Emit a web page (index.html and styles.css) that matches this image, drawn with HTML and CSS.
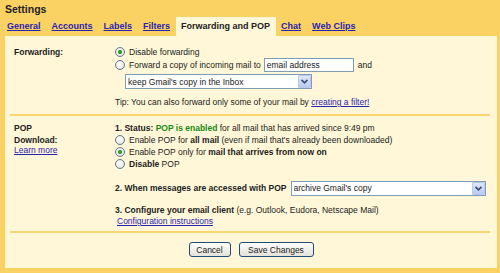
FILE: index.html
```html
<!DOCTYPE html>
<html lang="en">
<head>
<meta charset="utf-8">
<title>Settings</title>
<link rel="stylesheet" href="styles.css">
</head>
<body>
<header class="header">
  <h1 class="title">Settings</h1>
  <nav class="tabs">
    <a class="tab" href="#">General</a>
    <a class="tab" href="#">Accounts</a>
    <a class="tab" href="#">Labels</a>
    <a class="tab" href="#">Filters</a>
    <span class="tab active">Forwarding and POP</span>
    <a class="tab" href="#">Chat</a>
    <a class="tab" href="#">Web Clips</a>
  </nav>
</header>
<main class="panel">
  <section class="section fwd">
    <div class="label">Forwarding:</div>
    <div class="body">
      <label class="opt"><input class="radio" type="radio" name="fwd" checked>Disable forwarding</label>
      <label class="opt opt-input"><input class="radio" type="radio" name="fwd">Forward a copy of incoming mail to <input class="text-input" type="text" value="email address"> and</label>
      <div class="select select-keep">
        <select><option>keep Gmail's copy in the Inbox</option></select>
        <span class="select-arrow"><svg width="9" height="7" viewBox="0 0 9 7"><path d="M1.5 1.8 L4.5 4.8 L7.5 1.8" fill="none" stroke="#3d4f78" stroke-width="1.7"/></svg></span>
      </div>
      <p class="tip">Tip: You can also forward only some of your mail by <a class="link" href="#">creating a filter!</a></p>
    </div>
  </section>
  <hr class="sep">
  <section class="section pop">
    <div class="label">
      <div>POP<br>Download:</div>
      <a class="link learn" href="#">Learn more</a>
    </div>
    <div class="body">
      <div class="line"><b>1. Status: <span class="green">POP is enabled</span></b> for all mail that has arrived since 9:49 pm</div>
      <label class="opt"><input class="radio" type="radio" name="pop">Enable POP for&nbsp;<b>all mail</b>&nbsp;(even if mail that's already been downloaded)</label>
      <label class="opt"><input class="radio" type="radio" name="pop" checked>Enable POP only for&nbsp;<b>mail that arrives from now on</b></label>
      <label class="opt"><input class="radio" type="radio" name="pop"><b>Disable</b>&nbsp;POP</label>
      <div class="access">
        <b>2. When messages are accessed with POP</b>
        <div class="select select-archive">
          <select><option>archive Gmail's copy</option></select>
          <span class="select-arrow"><svg width="9" height="7" viewBox="0 0 9 7"><path d="M1.5 1.8 L4.5 4.8 L7.5 1.8" fill="none" stroke="#3d4f78" stroke-width="1.7"/></svg></span>
        </div>
      </div>
      <div class="line configure"><b>3. Configure your email client</b> (e.g. Outlook, Eudora, Netscape Mail)</div>
      <a class="link config-link" href="#">Configuration instructions</a>
    </div>
  </section>
  <hr class="sep">
  <div class="actions">
    <button class="btn btn-cancel" type="button">Cancel</button>
    <button class="btn btn-save" type="button">Save Changes</button>
  </div>
</main>
</body>
</html>
```
FILE: styles.css
```css
html, body {
  margin: 0;
  height: 273px;
  overflow: hidden;
}
body {
  background: #fad163;
  font-family: "Liberation Sans", Arial, sans-serif;
  font-size: 8.5px;
  color: #222;
}
.header {
  padding: 2px 0 0 5px;
}
.title {
  margin: 0;
  font-size: 10.5px;
  line-height: 14px;
  font-weight: bold;
  color: #222;
}
.tabs {
  display: flex;
  height: 19px;
  margin: 1px 0 0 -3.5px;
}
.tab {
  padding: 0 5.5px;
  font-size: 9px;
  font-weight: bold;
  line-height: 19px;
  color: #2a23b0;
  text-decoration: underline;
}
.tab.active {
  background: #fff7d7;
  color: #222;
  text-decoration: none;
}
.panel {
  background: #fff7d7;
  margin: 0 3px 0 5px;
  height: 232px;
  display: flex;
  flex-direction: column;
}
.section {
  display: grid;
  grid-template-columns: 101px 1fr;
  padding-left: 9px;
}
.fwd {
  padding: 10px 0 6px 9px;
}
.pop {
  padding: 6px 0 4px 9px;
}
.label {
  font-weight: bold;
  line-height: 12px;
}
.body {
  display: flex;
  flex-direction: column;
  min-width: 0;
}
.opt {
  display: flex;
  align-items: center;
  height: 12px;
  white-space: nowrap;
}
.opt-input {
  height: 14px;
}
.line {
  line-height: 12px;
  white-space: nowrap;
}
.radio {
  appearance: none;
  -webkit-appearance: none;
  box-sizing: border-box;
  width: 10px;
  height: 10px;
  margin: 0 4px 0 0;
  border: 1px solid #5f7892;
  border-radius: 50%;
  background: radial-gradient(circle at 40% 40%, #ffffff, #dcdad0);
  flex: none;
}
.radio:checked {
  background: radial-gradient(circle, #2f9e2f 0 1.8px, transparent 2.4px),
              radial-gradient(circle at 40% 40%, #ffffff, #dcdad0);
}
.text-input {
  box-sizing: border-box;
  width: 90px;
  height: 14px;
  margin: 0 4px 0 3px;
  padding: 0 2px;
  border: 1px solid #7f9db9;
  background: #fff;
  font: inherit;
  color: #222;
}
.select {
  position: relative;
  height: 15px;
  flex: none;
}
.select select {
  appearance: none;
  -webkit-appearance: none;
  box-sizing: border-box;
  width: 100%;
  height: 100%;
  margin: 0;
  padding: 0 2px;
  border: 1px solid #7f9db9;
  border-radius: 0;
  background: #fff;
  font: inherit;
  color: #222;
}
.select-arrow {
  position: absolute;
  top: 1px;
  right: 1px;
  bottom: 1px;
  width: 13px;
  box-sizing: border-box;
  border: 1px solid #b8c9ec;
  border-radius: 1px;
  background: linear-gradient(#dfe8fb, #b9cbf3);
  display: flex;
  align-items: center;
  justify-content: center;
  pointer-events: none;
}
.select-keep {
  width: 187px;
  margin: 2px 0 0 10px;
}
.tip {
  margin: 7px 0 0;
  line-height: 12px;
  white-space: nowrap;
}
.link {
  color: #2a23b0;
  text-decoration: underline;
}
.learn {
  display: block;
  margin-top: -2px;
  font-weight: normal;
}
.green {
  color: #138a13;
}
.sep {
  border: 0;
  height: 2px;
  margin: 0 7px 0 5px;
  background: #fad66f;
}
.access {
  display: flex;
  align-items: center;
  height: 16px;
  margin-top: 10px;
  white-space: nowrap;
}
.select-archive {
  flex: 1;
  min-width: 0;
  margin: 0 11px 0 4px;
}
.configure {
  margin-top: 8px;
}
.config-link {
  line-height: 11px;
  padding-left: 2px;
  align-self: flex-start;
}
.actions {
  display: flex;
  justify-content: center;
  gap: 8px;
  padding-top: 9px;
}
.btn {
  box-sizing: border-box;
  height: 15px;
  padding: 0;
  border: 1px solid #244a7c;
  border-radius: 3px;
  background: linear-gradient(#fdfdfb, #e4e2d9);
  font: inherit;
  color: #222;
}
.btn-cancel {
  width: 42px;
}
.btn-save {
  width: 75px;
}
```
